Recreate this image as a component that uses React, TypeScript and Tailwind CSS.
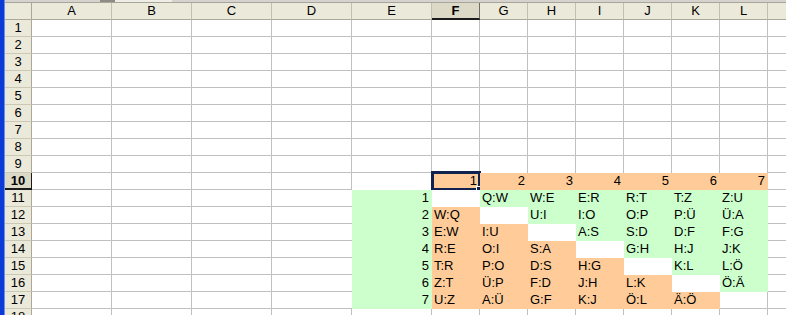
import clsx from 'clsx';

const COLS = ['A', 'B', 'C', 'D', 'E', 'F', 'G', 'H', 'I', 'J', 'K', 'L', 'M'];
const ROWS = Array.from({ length: 18 }, (_, i) => i + 1);

const PAIRS = [
  ['', 'Q:W', 'W:E', 'E:R', 'R:T', 'T:Z', 'Z:U'],
  ['W:Q', '', 'U:I', 'I:O', 'O:P', 'P:Ü', 'Ü:A'],
  ['E:W', 'I:U', '', 'A:S', 'S:D', 'D:F', 'F:G'],
  ['R:E', 'O:I', 'S:A', '', 'G:H', 'H:J', 'J:K'],
  ['T:R', 'P:O', 'D:S', 'H:G', '', 'K:L', 'L:Ö'],
  ['Z:T', 'Ü:P', 'F:D', 'J:H', 'L:K', '', 'Ö:Ä'],
  ['U:Z', 'A:Ü', 'G:F', 'K:J', 'Ö:L', 'Ä:Ö', ''],
];

type Cell = { fill: '' | 'green' | 'orange'; text: string; right?: boolean };

// row: 1-based sheet row, col: 0-based column index (A = 0)
function cellAt(row: number, col: number): Cell {
  if (row === 10 && col >= 5 && col <= 11) return { fill: 'orange', text: String(col - 4), right: true };
  if (row >= 11 && row <= 17) {
    if (col === 4) return { fill: 'green', text: String(row - 10), right: true };
    if (col >= 5 && col <= 11) {
      const i = row - 11;
      const j = col - 5;
      if (i === j) return { fill: '', text: '' };
      return { fill: j > i ? 'green' : 'orange', text: PAIRS[i][j] };
    }
  }
  return { fill: '', text: '' };
}

function SheetCell({ row, col }: { row: number; col: number }) {
  const c = cellAt(row, col);
  const filled = c.fill !== '';
  const rightFilled = col < COLS.length - 1 && cellAt(row, col + 1).fill !== '';
  const belowFilled = cellAt(row + 1, col).fill !== '';
  const active = row === 10 && col === 5;

  return (
    <div
      className={clsx(
        'relative h-[17px] overflow-visible whitespace-nowrap text-[13px] leading-[16px] text-black',
        c.fill === 'green' && 'bg-[#ccffcc]',
        c.fill === 'orange' && 'bg-[#ffcc99]',
        !filled && 'bg-white',
        !filled && !rightFilled && 'border-r border-[#c0c0c0]',
        !filled && !belowFilled && 'border-b border-[#c0c0c0]',
        c.right ? 'pr-[3px] text-right' : 'pl-[2px]'
      )}
    >
      {c.text}
      {active && (
        <div className="absolute -top-[2px] -left-[1px] -right-[1px] -bottom-[1px] border-[3px] border-[#10234f]">
          <div className="absolute -right-[4px] -bottom-[4px] h-[6px] w-[6px] border border-white bg-[#10234f]" />
        </div>
      )}
    </div>
  );
}

export default function App() {
  return (
    <div className="flex h-[315px] w-[786px] overflow-hidden bg-white font-['Liberation_Sans',Arial,sans-serif]">
      {/* window frame */}
      <div className="flex h-full w-[5px] shrink-0">
        <div className="w-[4px] bg-[#0b3bd6]" />
        <div className="w-[1px] bg-[#6d8ee6]" />
      </div>

      <div className="flex min-w-0 flex-1 flex-col">
        {/* split bar remnant */}
        <div className="flex h-[3px] shrink-0 border-b border-[#a7a69c] bg-[#d6d3ce]">
          <div className="w-[95px]" />
          <div className="w-[15px] bg-[#8d8b82]" />
          <div className="w-[57px] bg-[#eeede6]" />
        </div>

        <div className="grid grid-cols-[27px_repeat(5,80px)_repeat(8,48px)]">
          {/* corner */}
          <div className="h-[17px] border-r border-b border-[#aca899] bg-[#ebe9da]" />
          {COLS.map((l, i) => (
            <div
              key={l}
              className={clsx(
                'flex h-[17px] items-start justify-center border-r text-[13px] leading-[16px] text-black',
                i === 5
                  ? 'border-b-2 border-r-[#6b6a63] border-b-[#1b1b1b] bg-[#dcd9c6] font-bold'
                  : 'border-b border-r-[#c2bfad] border-b-[#aca899] bg-[#ebe9da]'
              )}
            >
              {/* column M is scrolled mostly out of view, its letter is not visible */}
              {l === 'M' ? '' : l}
            </div>
          ))}

          {ROWS.map((r) => (
            <div key={r} className="contents">
              <div
                className={clsx(
                  'flex h-[17px] justify-center border-r text-[13px] leading-[16px] text-black',
                  r === 10
                    ? 'border-b-2 border-r-[#1b1b1b] border-b-[#1b1b1b] bg-[#dcd9c6] font-bold'
                    : 'border-b border-r-[#aca899] border-b-[#cbc8b6] bg-[#ebe9da]'
                )}
              >
                {r}
              </div>
              {COLS.map((_, c) => (
                <SheetCell key={c} row={r} col={c} />
              ))}
            </div>
          ))}
        </div>
      </div>
    </div>
  );
}
